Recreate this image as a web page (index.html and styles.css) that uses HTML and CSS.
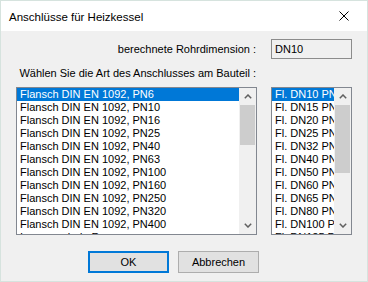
FILE: index.html
```html
<!DOCTYPE html>
<html>
<head>
<meta charset="utf-8">
<link rel="stylesheet" href="styles.css">
</head>
<body>
<div class="window">
  <div class="titlebar">
    <span class="title">Anschlüsse für Heizkessel</span>
    <span class="close">
      <svg width="10" height="10" viewBox="0 0 10 10"><path d="M0.5 0.5 L9.5 9.5 M9.5 0.5 L0.5 9.5" stroke="#000" stroke-width="1" fill="none"/></svg>
    </span>
  </div>
  <div class="content">
    <div class="label row1">berechnete Rohrdimension :</div>
    <div class="textbox">DN10</div>
    <div class="label row2">Wählen Sie die Art des Anschlusses am Bauteil :</div>
    <div class="spacer"></div>
    <div class="listbox wide">
      <div class="items">
        <div class="item sel">Flansch DIN EN 1092, PN6</div>
        <div class="item">Flansch DIN EN 1092, PN10</div>
        <div class="item">Flansch DIN EN 1092, PN16</div>
        <div class="item">Flansch DIN EN 1092, PN25</div>
        <div class="item">Flansch DIN EN 1092, PN40</div>
        <div class="item">Flansch DIN EN 1092, PN63</div>
        <div class="item">Flansch DIN EN 1092, PN100</div>
        <div class="item">Flansch DIN EN 1092, PN160</div>
        <div class="item">Flansch DIN EN 1092, PN250</div>
        <div class="item">Flansch DIN EN 1092, PN320</div>
        <div class="item">Flansch DIN EN 1092, PN400</div>
        <div class="item">Innengewinde Rp</div>
      </div>
      <div class="scrollbar">
        <div class="arrow"><svg width="8" height="5" viewBox="0 0 8 5"><path d="M0.8 4.2 L4 1 L7.2 4.2" stroke="#606060" stroke-width="1.5" fill="none"/></svg></div>
        <div class="track"><div class="thumb short"></div></div>
        <div class="arrow"><svg width="8" height="5" viewBox="0 0 8 5"><path d="M0.8 0.8 L4 4 L7.2 0.8" stroke="#606060" stroke-width="1.5" fill="none"/></svg></div>
      </div>
    </div>
    <div class="listbox narrow">
      <div class="items">
        <div class="item sel">Fl. DN10 PN6</div>
        <div class="item">Fl. DN15 PN6</div>
        <div class="item">Fl. DN20 PN6</div>
        <div class="item">Fl. DN25 PN6</div>
        <div class="item">Fl. DN32 PN6</div>
        <div class="item">Fl. DN40 PN6</div>
        <div class="item">Fl. DN50 PN6</div>
        <div class="item">Fl. DN60 PN6</div>
        <div class="item">Fl. DN65 PN6</div>
        <div class="item">Fl. DN80 PN6</div>
        <div class="item">Fl. DN100 PN6</div>
        <div class="item">Fl. DN125 PN6</div>
      </div>
      <div class="scrollbar">
        <div class="arrow"><svg width="8" height="5" viewBox="0 0 8 5"><path d="M0.8 4.2 L4 1 L7.2 4.2" stroke="#606060" stroke-width="1.5" fill="none"/></svg></div>
        <div class="track"><div class="thumb long"></div></div>
        <div class="arrow"><svg width="8" height="5" viewBox="0 0 8 5"><path d="M0.8 0.8 L4 4 L7.2 0.8" stroke="#606060" stroke-width="1.5" fill="none"/></svg></div>
      </div>
    </div>
  </div>
  <div class="buttons">
    <button class="btn default">OK</button>
    <button class="btn">Abbrechen</button>
  </div>
</div>
</body>
</html>
```

FILE: styles.css
```css
html, body {
  margin: 0;
  padding: 0;
  background: #f0f0f0;
}
.window {
  width: 368px;
  height: 282px;
  box-sizing: border-box;
  border: 1px solid #d6e3de;
  background: #f0f0f0;
  display: flex;
  flex-direction: column;
  font-family: "Liberation Sans", Arial, sans-serif;
  font-size: 11px;
  color: #000;
}
.titlebar {
  height: 30px;
  flex: none;
  background: #fff;
  display: flex;
  align-items: center;
  justify-content: space-between;
  padding-left: 8px;
}
.title {
  font-size: 11.5px;
  padding-top: 1px;
}
.close {
  width: 46px;
  height: 30px;
  display: flex;
  align-items: center;
  justify-content: center;
}
.content {
  display: grid;
  grid-template-columns: 241px 81px;
  column-gap: 14px;
  padding: 8px 15px 0 15px;
}
.label {
  text-align: right;
  padding-right: 1px;
  line-height: 13px;
  white-space: nowrap;
}
.row1 {
  height: 20px;
  line-height: 20px;
}
.textbox {
  height: 20px;
  box-sizing: border-box;
  border: 1px solid #8c8c8c;
  background: #f0f0f0;
  padding-left: 3px;
  line-height: 18px;
}
.row2 {
  margin-top: 8px;
}
.spacer {
  margin-top: 8px;
}
.listbox {
  margin-top: 7px;
  height: 148px;
  box-sizing: border-box;
  border: 1px solid #828790;
  background: #fff;
  display: flex;
  overflow: hidden;
}
.items {
  flex: 1;
  min-width: 0;
  overflow: hidden;
}
.item {
  height: 13px;
  line-height: 13px;
  padding-left: 3px;
  white-space: nowrap;
  overflow: hidden;
}
.item.sel {
  background: #0078d7;
  color: #fff;
}
.scrollbar {
  width: 17px;
  flex: none;
  background: #f0f0f0;
  display: flex;
  flex-direction: column;
}
.arrow {
  height: 17px;
  flex: none;
  display: flex;
  align-items: center;
  justify-content: center;
}
.track {
  flex: 1;
  padding: 0 1px;
}
.thumb {
  background: #cdcdcd;
}
.thumb.short {
  height: 40px;
}
.thumb.long {
  height: 68px;
}
.buttons {
  display: flex;
  gap: 9px;
  padding-left: 87px;
  margin-top: 16px;
}
.btn {
  width: 81px;
  height: 22px;
  box-sizing: border-box;
  border: 1px solid #adadad;
  background: #e1e1e1;
  font-family: "Liberation Sans", Arial, sans-serif;
  font-size: 11px;
  color: #000;
  padding: 0;
  margin: 0;
}
.btn.default {
  border: 2px solid #0078d7;
}
```
